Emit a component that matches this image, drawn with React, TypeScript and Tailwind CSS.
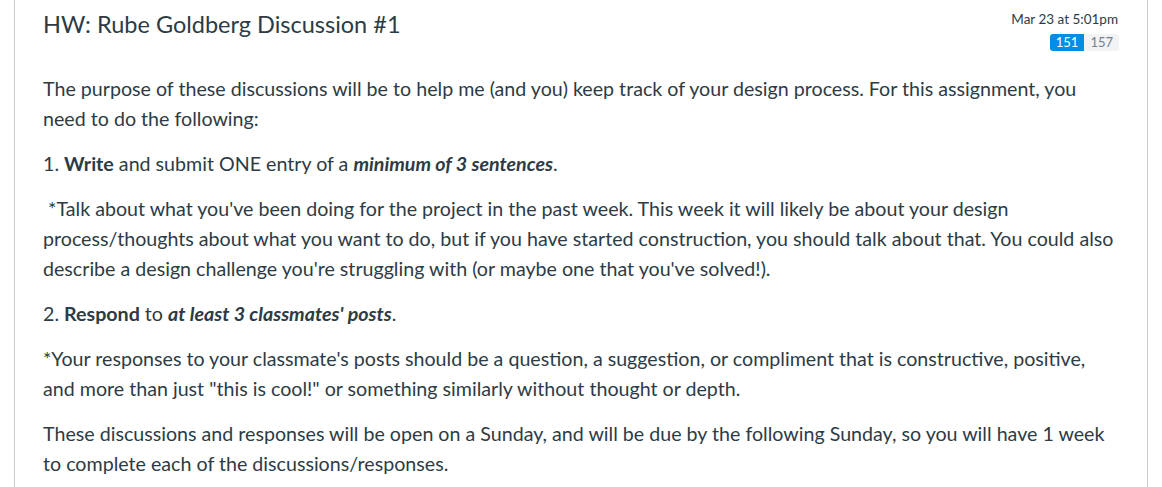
// Discussion topic page - header + body

export default function App() {
  return (
    <div className="min-h-screen bg-white font-['Lato','Noto_Sans',sans-serif] text-[#2d3b45]">
      <div className="ml-[14px] w-[1134px] border-x border-[#c7cdd1] min-h-[487px] pl-[28px] pr-[28px]">
        {/* Header */}
        <div className="flex justify-between items-start pt-[9px]">
          <h1 className="text-[23.5px] leading-[30px] font-normal">HW: Rube Goldberg Discussion #1</h1>
          <div className="flex flex-col items-end pt-[2px]">
            <div className="text-[13.5px] leading-[17px] mr-px">Mar 23 at 5:01pm</div>
            <div className="flex mt-[6px] text-[13px] leading-[17px]">
              <span className="bg-[#008ee2] text-white px-[6px] rounded-l-[3px]">151</span>
              <span className="bg-[#f2f3f4] text-[#73818c] px-[6px] rounded-r-[3px]">157</span>
            </div>
          </div>
        </div>

        {/* Body */}
        <div className="pt-[23px] text-[19.65px] leading-[30px] space-y-[15px]">
          <p>
            The purpose of these discussions will be to help me (and you) keep track of your design process. For this
            assignment, you need to do the following:
          </p>
          <p>
            1. <strong className="font-bold">Write</strong> and submit ONE entry of a{' '}
            <strong className="font-bold italic">minimum of 3 sentences</strong>.
          </p>
          <p>
            &nbsp;*Talk about what you've been doing for the project in the past week. This week it will likely be about
            your design process/thoughts about what you want to do, but if you have started construction, you should talk
            about that. You could also describe a design challenge you're struggling with (or maybe one that you've
            solved!).
          </p>
          <p>
            2. <strong className="font-bold">Respond</strong> to{' '}
            <strong className="font-bold italic">at least 3 classmates' posts</strong>.
          </p>
          <p>
            *Your responses to your classmate's posts should be a question, a suggestion, or compliment that is
            constructive, positive, and more than just "this is cool!" or something similarly without thought or depth.
          </p>
          <p>
            These discussions and responses will be open on a Sunday, and will be due by the following Sunday, so you will
            have 1 week to complete each of the discussions/responses.
          </p>
        </div>
      </div>
    </div>
  )
}
